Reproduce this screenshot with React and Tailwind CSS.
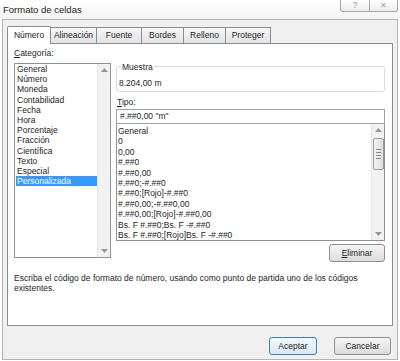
// Formato de celdas – cuadro de diálogo estilo Excel
import React, { useState } from 'react';

const categorias = [
  'General', 'Número', 'Moneda', 'Contabilidad', 'Fecha', 'Hora',
  'Porcentaje', 'Fracción', 'Científica', 'Texto', 'Especial', 'Personalizada',
];

const tipos = [
  'General', '0', '0,00', '#.##0', '#.##0,00', '#.##0;-#.##0',
  '#.##0;[Rojo]-#.##0', '#.##0,00;-#.##0,00', '#.##0,00;[Rojo]-#.##0,00',
  'Bs. F #.##0;Bs. F -#.##0', 'Bs. F #.##0;[Rojo]Bs. F -#.##0',
];

const tabs = ['Número', 'Alineación', 'Fuente', 'Bordes', 'Relleno', 'Proteger'];

const ArrowUp = () => (
  <svg width="7" height="4" viewBox="0 0 7 4"><path d="M0 4 L3.5 0 L7 4 Z" fill="#5a5a5a" /></svg>
);
const ArrowDown = () => (
  <svg width="7" height="4" viewBox="0 0 7 4"><path d="M0 0 L3.5 4 L7 0 Z" fill="#5a5a5a" /></svg>
);

const Scrollbar = ({ thumb }) => (
  <div className="flex flex-col items-center w-[13px] h-full bg-[#f2f2f2] border-l border-[#e6e6e6]">
    <div className="h-[12px] flex items-center justify-center opacity-60"><ArrowUp /></div>
    {thumb && (
      <div className="w-[11px] h-[32px] mt-[2px] rounded-[2px] border border-[#9b9b9b] bg-gradient-to-r from-[#f4f4f4] to-[#dcdcdc] flex flex-col items-center justify-center gap-[2px]">
        <div className="w-[5px] h-px bg-[#8a8a8a]" />
        <div className="w-[5px] h-px bg-[#8a8a8a]" />
        <div className="w-[5px] h-px bg-[#8a8a8a]" />
        <div className="w-[5px] h-px bg-[#8a8a8a]" />
      </div>
    )}
    <div className="flex-1" />
    <div className="h-[12px] flex items-center justify-center opacity-60"><ArrowDown /></div>
  </div>
);

const Boton = ({ children, principal, className }) => (
  <button
    className={
      'h-[18px] rounded-[3px] border text-[8.5px] text-[#1e1e1e] ' +
      (principal
        ? 'border-[#3c7fb1] bg-gradient-to-b from-[#f2f8fc] to-[#d9e8f3] '
        : 'border-[#8e8f8f] bg-gradient-to-b from-[#f6f6f6] to-[#dcdcdc] ') +
      (className || '')
    }
  >
    {children}
  </button>
);

export default function App() {
  const [categoria, setCategoria] = useState('Personalizada');
  const [tab, setTab] = useState('Número');

  return (
    <div className="w-[400px] h-[361px] bg-white overflow-hidden font-['Liberation_Sans',Arial,sans-serif] text-[#1e1e1e] text-[8.5px]">
      {/* barra de título */}
      <div className="h-[19px] flex items-start justify-between bg-gradient-to-b from-white to-[#f4f4f4]">
        <div className="pl-[3px] pt-[4px] text-[9.5px] leading-[11px] text-[#222]">Formato de celdas</div>
        <div className="flex mr-[2px]">
          <div className="w-[30px] h-[12px] border border-t-0 border-[#a7a7a7] rounded-bl-[3px] bg-gradient-to-b from-white to-[#ececec] flex items-center justify-center text-[#9a9a9a] text-[9px] leading-none">?</div>
          <div className="w-[28px] h-[12px] border border-t-0 border-l-0 border-[#a7a7a7] rounded-br-[3px] bg-gradient-to-b from-white to-[#ececec] flex items-center justify-center text-[#a5a5a5] text-[8px] leading-none">✕</div>
        </div>
      </div>

      {/* cuerpo */}
      <div className="mx-[2px] h-[341px] border border-[#b3b3b3] bg-[#f0f0f0] px-[4px] pt-[6px] flex flex-col">
        {/* pestañas */}
        <div className="flex items-end h-[17px]">
          {tabs.map((t) => {
            const activa = t === tab;
            return (
              <div
                key={t}
                onClick={() => setTab(t)}
                className={
                  'border border-b-0 border-[#898c95] flex items-center justify-center leading-none cursor-default ' +
                  (activa
                    ? 'h-[18px] -mb-px relative z-10 bg-white w-[44px] rounded-t-[2px]'
                    : 'h-[16px] bg-gradient-to-b from-[#f7f7f7] to-[#e3e3e3] -ml-px ')
                }
                style={activa ? undefined : { width: { 'Alineación': 47, 'Fuente': 46, 'Bordes': 43, 'Relleno': 43, 'Proteger': 46 }[t] }}
              >
                {t}
              </div>
            );
          })}
        </div>

        {/* panel */}
        <div className="h-[283px] bg-white border border-[#898c95] px-[6px] pt-[4px] flex flex-col">
          <div className="flex gap-[5px]">
            {/* columna izquierda */}
            <div className="w-[97px] flex flex-col">
              <div className="h-[10px] leading-[10px]"><span className="underline">C</span>ategoría:</div>
              <div className="mt-[5px] h-[195px] border border-[#8e9199] flex">
                <div className="flex-1 flex flex-col">
                  {categorias.map((c) => (
                    <div
                      key={c}
                      onClick={() => setCategoria(c)}
                      className={
                        'h-[10.2px] leading-[10.2px] pl-[1px] ml-[1px] ' +
                        (c === categoria ? 'bg-[#3399ff] text-white' : '')
                      }
                    >
                      {c}
                    </div>
                  ))}
                </div>
                <Scrollbar />
              </div>
            </div>

            {/* columna derecha */}
            <div className="w-[269px] flex flex-col">
              <div className="mt-[18px] relative h-[26px] border border-[#d6dbe0] rounded-[3px]">
                <div className="absolute -top-[5px] left-[4px] bg-white px-[1px] leading-[10px]">Muestra</div>
                <div className="pl-[2px] pt-[11px] leading-[10px]">8.204,00 m</div>
              </div>
              <div className="mt-[5px] h-[10px] leading-[10px] pl-[1px]"><span className="underline">T</span>ipo:</div>
              <div className="mt-[2px] h-[15px] border border-[#9ea2a8] pl-[3px] leading-[13px]">#.##0,00 "m"</div>
              <div className="h-[117px] border border-t-0 border-[#8e9199] flex">
                <div className="flex-1 flex flex-col pt-[2px] pl-[1px]">
                  {tipos.map((t) => (
                    <div key={t} className="h-[10.4px] leading-[10.4px] whitespace-nowrap">{t}</div>
                  ))}
                </div>
                <Scrollbar thumb />
              </div>
              <div className="flex justify-end mt-[3px]">
                <Boton className="w-[56px] h-[16px]"><span className="underline">E</span>liminar</Boton>
              </div>
            </div>
          </div>

          <div className="mt-[11px] leading-[10px]">
            <div className="whitespace-nowrap">Escriba el código de formato de número, usando como punto de partida uno de los códigos</div>
            <div>existentes.</div>
          </div>
        </div>

        {/* botones */}
        <div className="flex justify-end gap-[17px] mt-[11px] mr-[2px]">
          <Boton principal className="w-[48px]">Aceptar</Boton>
          <Boton className="w-[57px]">Cancelar</Boton>
        </div>
      </div>
    </div>
  );
}
